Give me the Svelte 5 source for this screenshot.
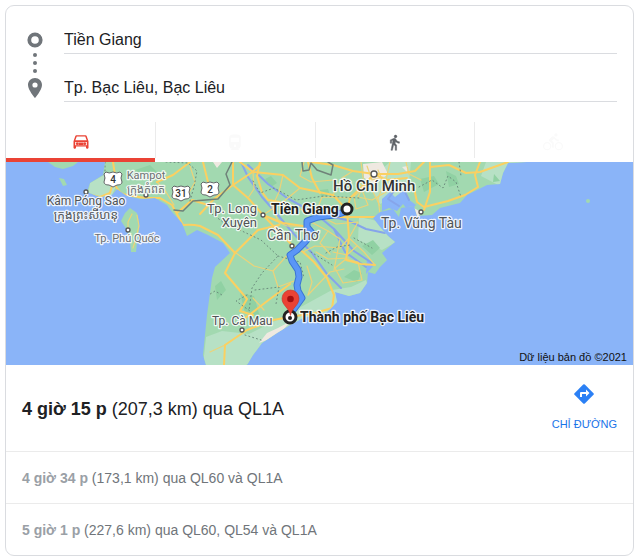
<script lang="ts">
    type Place = {
        lines: string[];
        x: number;
        y: number;
        dot: [number, number];
        size: number;
        anchor: "start" | "middle" | "end";
        tone: "soft" | "mid" | "strong";
    };

    type Alternative = { time: string; detail: string };

    let origin: string = $state("Tiền Giang");
    let destination: string = $state("Tp. Bạc Liêu, Bạc Liêu");
    let mode: string = $state("car");

    const modes = [
        { id: "car", label: "Lái xe", disabled: false },
        { id: "transit", label: "Phương tiện công cộng", disabled: true },
        { id: "walk", label: "Đi bộ", disabled: false },
        { id: "bike", label: "Đi xe đạp", disabled: true },
    ];

    const alternatives: Alternative[] = [
        { time: "4 giờ 34 p", detail: "(173,1 km) qua QL60 và QL1A" },
        { time: "5 giờ 1 p", detail: "(227,6 km) qua QL60, QL54 và QL1A" },
    ];

    const places: Place[] = [
        { lines: ["Kampot", "ក្រុងកំពត"], x: 140, y: 17, dot: [140, 33], size: 11, anchor: "middle", tone: "soft" },
        { lines: ["Kâm Póng Sao", "ក្រុងព្រះសីហនុ"], x: 80, y: 43, dot: [80, 30], size: 12, anchor: "middle", tone: "mid" },
        { lines: ["Tp. Phú Quốc"], x: 121, y: 80, dot: [122, 68], size: 11, anchor: "middle", tone: "soft" },
        { lines: ["Tp. Long", "Xuyên"], x: 251, y: 51, dot: [257, 53], size: 13, anchor: "end", tone: "mid" },
        { lines: ["Cần Thơ"], x: 261, y: 78, dot: [286, 84], size: 14, anchor: "start", tone: "mid" },
        { lines: ["Hồ Chí Minh"], x: 327, y: 29, dot: [368, 12], size: 15, anchor: "start", tone: "strong" },
        { lines: ["Tp. Vũng Tàu"], x: 375, y: 66, dot: [415, 50], size: 14, anchor: "start", tone: "mid" },
        { lines: ["Tp. Cà Mau"], x: 206, y: 163, dot: [236, 168], size: 12, anchor: "start", tone: "mid" },
    ];

    const shields = [
        { n: "4", x: 107, y: 17 },
        { n: "31", x: 175, y: 31 },
        { n: "2", x: 204, y: 27 },
    ];

    const highways = [
        "M81 32 94 35 104 31 109 13 107 0",
        "M109 23 Q114 33 121 33 L139 36 154 36 166 43 177 63 Q186 62 194 64 L212 73 229 91 252 68 273 63",
        "M151 20 167 13 184 0M197 0 202 20 207 28",
        "M171 51 186 38 202 43M194 52 208 37 227 23 245 11 254 3",
        "M227 0V23L242 36 257 53 274 71 286 83 297 90 308 100 321 116 328 133 326 146 309 151 284 155 267 158 241 168 219 183 218 203",
        "M234 0 247 10 277 13 294 26 327 33 341 48",
        "M368 12 358 23 344 36 341 48 343 76 340 98 355 102 369 103",
        "M368 12 347 9 327 3 305 0M368 12 392 12 409 9 418 0",
        "M310 55H348L373 55",
        "M229 91 219 111 241 137 234 149 247 153M234 160 260 140 284 122",
        "M368 12 380 18 401 16M424 0V30L418 48",
        "M424 5 443 3 460 11 474 10 502 0M474 0 469 13 472 25 459 33 442 39 418 45 411 40 408 26",
        "M254 0 251 14 256 30 262 38 274 40M257 53 277 61 297 64M302 0 306 16 314 31",
    ];

    const roads = [
        "M329 106 340 97 352 100 356 118 337 121 329 106",
        "M286 88 267 109 272 125 288 119M267 109 248 104 230 91",
        "M302 133 324 110 338 107M305 60 322 69 334 77 328 108",
        "M257 53 281 64 302 64M257 53 277 40 294 26M277 13 273 30 266 45 274 63",
        "M297 90 309 84 334 86 343 76 358 90 369 103M308 56 316 35 344 36",
        "M327 33 336 16 347 9M355 0 358 23 352 35 366 38 380 30",
        "M301 104 306 120 302 133M247 136 258 148M286 44 301 50 320 44",
        "M219 183 204 190M247 10 248 27 242 36M384 0 380 18 386 30",
        "M318 56 330 62 352 60 343 76M327 90 341 93 351 84M322 69 314 81 324 92",
        "M298 0 294 14 305 20 327 18M350 20 366 28 374 44M400 0 403 12 415 18",
        "M151 20 160 30 168 43M184 4 189 20 180 36M356 28 362 43 350 47 348 34Z",
        "M372 8 378 22 372 36 374 52M361 4 366 18 377 15M310 90 322 97 343 96",
    ];

    const rivers = [
        "M235 0 242 15 256 35 271 52 286 70 306 91 321 112 335 126",
        "M242 3 262 22 281 36 310 52 328 67 348 89 366 101",
        "M310 52 341 58 360 67 379 71M328 67 339 90 360 105",
        "M377 20 388 29 382 37 393 44M399 30 403 38",
    ];

    const boundaries = [
        "M99 0V20M160 0 182 1 191 9 188 25 184 39",
        "M247 19 254 31 268 26 290 38 318 34 353 36",
        "M206 52 217 60 238 70 255 78 272 94 256 111 246 126 243 149",
        "M272 94 294 100 298 116M249 128 273 125 270 142",
        "M201 134 209 129 216 133M239 173 255 178M320 91 331 85 344 83",
        "M241 133 230 139 244 149M413 25 426 18 437 26 442 14 450 20 455 35",
        "M453 0 455 14M348 76 366 86M305 90 326 103",
    ];

    const coast =
        "M99 0 97 13 84 21 81 30 94 35 106 33 111 27 121 34 134 37 149 36 161 43 166 50 176 61 181 74 191 68 202 73 217 81 224 91 209 105 206 116 201 153 197 193 200 203H241L247 193 256 181 271 171 284 163 297 156 321 150 331 140 329 130 343 134 354 131 361 121 362 110 369 112 374 105 381 98 376 91 389 80 382 74 374 65 367 56 374 50 387 47 393 55 395 46 408 44 411 54 426 53 434 46 454 41 461 33 481 23 494 22 497 11 502 1 521 0Z";

    const drive =
        "M341 49C328 55 317 53 309 56L301 59 301 65 306 71 299 80 291 88 284 93 286 99 292 108 293 115 291 123 292 129 296 136 288 147";
</script>

<svelte:head>
    <title>Tiền Giang – Tp. Bạc Liêu</title>
</svelte:head>

<main class="card">
    <form class="stops" onsubmit={(e) => e.preventDefault()}>
        <svg class="stops-icon" width="16" height="66" viewBox="0 0 16 66" aria-hidden="true">
            <circle cx="8" cy="8" r="5.7" fill="none" stroke="#70757a" stroke-width="3.8" />
            <g fill="#70757a">
                <circle cx="8" cy="23" r="2" />
                <circle cx="8" cy="31" r="2" />
                <circle cx="8" cy="39" r="2" />
                <path
                    fill-rule="evenodd"
                    d="M8 46C4 46 1 49 1 53c0 5 7 13 7 13s7-8 7-13c0-4-3-7-7-7zm0 4.4a2.6 2.6 0 1 1 0 5.2 2.6 2.6 0 0 1 0-5.2z"
                />
            </g>
        </svg>
        <div class="fields">
            <input aria-label="Điểm xuất phát" bind:value={origin} />
            <input aria-label="Điểm đến" bind:value={destination} />
        </div>
    </form>

    <div class="modes" role="tablist">
        {#each modes as m (m.id)}
            <button
                class="mode"
                class:active={mode === m.id}
                role="tab"
                aria-selected={mode === m.id}
                aria-label={m.label}
                disabled={m.disabled}
                onclick={() => (mode = m.id)}
            >
                <svg
                    class="mode-icon"
                    class:walk={m.id === "walk"}
                    viewBox="0 0 24 24"
                    fill="currentColor"
                    aria-hidden="true"
                >
                    {#if m.id === "car"}
                        <path
                            fill-rule="evenodd"
                            d="M18.900 5C18.700 4.400 18.200 4 17.500 4h-11c-.7 0-1.200.4-1.400 1L3 11v8c0 .6.400 1 1 1h1c.6 0 1-.4 1-1v-1.500h12V19c0 .6.400 1 1 1h1c.6 0 1-.4 1-1v-8zM6.900 5.500h10.200L18.800 10H5.200zM5 12h14v3.800H5z"
                        />
                        <circle cx="7.500" cy="14" r="1.700" />
                        <circle cx="16.500" cy="14" r="1.700" />
                        <path d="M9 12.500h6v3H9z" />
                    {:else if m.id === "transit"}
                        <path
                            d="M12 3c-4 0-7 .5-7 4v9.500C5 18.400 6.600 20 8.500 20L7 21.500h10L15.500 20c1.900 0 3.500-1.600 3.500-3.500V7c0-3.500-3-4-7-4zM7 7h10v5H7zm5 8a1.500 1.500 0 1 1 0 3 1.500 1.500 0 0 1 0-3z"
                        />
                    {:else if m.id === "walk"}
                        <path
                            stroke="currentColor"
                            stroke-width=".6"
                            d="M13.5 5.500c1.100 0 2-.9 2-2s-.9-2-2-2-2 .9-2 2 .9 2 2 2zM9.800 8.900 7 23h2.100l1.800-8 2.100 2v6h2v-7.500l-2.100-2 .6-3C14.800 12 16.800 13 19 13v-2c-1.900 0-3.500-1-4.300-2.400l-1-1.600c-.4-.6-1-1-1.700-1-.3 0-.5.1-.8.1L6 8.300V13h2V9.600l1.800-.7"
                        />
                    {:else}
                        <path
                            d="M5 12a5 5 0 1 0 0 10 5 5 0 0 0 0-10zm0 8.500a3.500 3.500 0 1 1 0-7 3.500 3.500 0 0 1 0 7zM19 12a5 5 0 1 0 0 10 5 5 0 0 0 0-10zm0 8.500a3.500 3.500 0 1 1 0-7 3.500 3.500 0 0 1 0 7zM15.500 5.500a2 2 0 1 0 0-4 2 2 0 0 0 0 4zM10.800 10.500l2.400-2.400.8.8c1.300 1.300 3 2.100 5 2.100V9c-1.500 0-2.700-.6-3.600-1.500l-1.900-1.900c-1-.8-2-.8-2.900 0L7.800 8.400c-.8.800-.8 2 0 2.800L11 14v5h2v-6.200z"
                        />
                    {/if}
                </svg>
            </button>
        {/each}
    </div>

    <svg class="map" viewBox="0 0 627 203" role="img" aria-label="Bản đồ">
        <defs>
            <clipPath id="land"><path d={coast} /></clipPath>
        </defs>
        <rect width="627" height="203" fill="#8ab4f8" />

        <!-- Land, with darker forest and paler coastal flats -->
        <g fill="#a2d9b0">
            <path d="M42 0H72L67 4 57 7 49 5ZM53 16 58 17 61 23 57 24Z" />
            <path
                d="M124 46 131 51 133 60 133 68 131 80 130 90 125 90 124 79 121 68 115 59 119 51Z"
            />
            <circle cx="582" cy="39" r="2" />
            <path d={coast} />
        </g>
        <g clip-path="url(#land)">
            <path
                fill="#b7e1c5"
                d="M197 203 200 175 216 169 243 172 271 158 326 128 345 125 360 118 364 131 320 165 240 203ZM84 21 100 12 112 20 105 35 82 33ZM353 55 376 60 390 80 376 88 352 78ZM480 0 525 0 494 24 475 14ZM361 20 384 0 405 0 402 30 374 42Z"
            />
            <path
                fill="#90d1a3"
                d="M259 17 265 14 271 21 265 25ZM314 28 322 27 324 33 315 36ZM209 124 215 119 220 128 211 138ZM280 70 286 73 281 78ZM338 115 348 108 356 111 351 120ZM356 84 367 78 374 86 366 93ZM414 17 428 14 433 22 418 30ZM440 9 450 14 453 22 443 25ZM488 12 494 19 487 20ZM129 8 144 3 153 12 142 19ZM234 131 248 134 254 155 239 151Z"
            />
            <g fill="#efe9e1">
                <path d="M357 2 376 0 382 12 369 22 358 16Z" />
                <path d="M253 181 261 171 272 166 285 159 276 169 261 178ZM207 0H216L211 6Z" />
                <path d="M406 45 415 50 411 57ZM396 5 402 4 401 10Z" />
            </g>
            <path
                fill="#8ab4f8"
                d="M376 37 384 30 389 35 398 28 402 37 410 43 403 50 397 42 391 49 383 46 376 49ZM361 97 369 102 360 112Z"
            />
            {#each rivers as d}
                <path {d} class="river" />
            {/each}
            {#each roads as d}
                <path {d} class="road" />
            {/each}
            {#each highways as d}
                <path {d} class="highway" />
            {/each}
            {#each boundaries as d}
                <path {d} class="boundary" />
            {/each}
            <path
                class="border"
                d="M168 48 177 49 187 39 212 37 224 23 220 12 226 0M296 0 297 9 303 8 305 1 311 8 325 13 327 3 322 0"
            />
        </g>
        <path class="road" d="M131 53 133 64 130 76 127 86M122 67V60L126 52" />

        <path class="route-edge" d={drive} />
        <path class="route" d={drive} />

        {#each shields as s}
            <path
                transform="translate({s.x} {s.y})"
                d="M-7-7Q-4-5 0-7 4-5 7-7L9-5Q7-1 9 3 9 6 4 6L0 8-4 6Q-9 6-9 3-7-1-9-5Z"
                fill="#fff"
                stroke="#646669"
            />
            <text class="shield" x={s.x} y={s.y + 4}>{s.n}</text>
        {/each}

        {#each places as p}
            <circle class="dot" cx={p.dot[0]} cy={p.dot[1]} r={p.size > 14 ? 3 : 2} />
            <text class="place {p.tone}" text-anchor={p.anchor} font-size={p.size}>
                {#each p.lines as line, i}
                    <tspan x={p.x} y={p.y + i * 14}>{line}</tspan>
                {/each}
            </text>
        {/each}

        <circle class="stop" cx="341" cy="47" r="5" />
        <text class="place end" x="265" y="52" font-size="14">Tiền Giang</text>

        <circle class="stop" cx="284" cy="155" r="6" />
        <circle cx="284" cy="156" r="2" fill="#222" />
        <path
            fill="#ea4335"
            stroke="#c5352a"
            stroke-width=".6"
            d="M284.500 128a8.500 8.500 0 0 0-8.500 8.500c0 7 7 9 8.500 17 1.500-8 8.500-10 8.500-17a8.500 8.500 0 0 0-8.500-8.500z"
        />
        <circle cx="284.500" cy="137" r="3.300" fill="#a50e0e" />
        <text class="place end" x="294" y="160" font-size="14">Thành phố Bạc Liêu</text>

        <text class="copyright" x="621" y="199">Dữ liệu bản đồ ©2021</text>
    </svg>

    <section class="summary">
        <h1 class="route-title"><b>4 giờ 15 p</b> (207,3 km) qua QL1A</h1>
        <a class="directions" href="#directions">
            <svg width="20" height="20" viewBox="0 0 20 20" aria-hidden="true">
                <path
                    fill="#2b80f5"
                    d="M9.200.5a1.200 1.200 0 0 1 1.600 0l8.700 8.700a1.200 1.200 0 0 1 0 1.600l-8.700 8.700a1.200 1.200 0 0 1-1.600 0L.5 10.800a1.200 1.200 0 0 1 0-1.600z"
                />
                <path fill="#fff" d="M6 13V9q0-1 1-1h5V5.500L15.500 9 12 12.500V10H8v3z" />
            </svg>
            <span>CHỈ ĐƯỜNG</span>
        </a>
    </section>

    {#each alternatives as alt}
        <p class="alternative"><b>{alt.time}</b> {alt.detail}</p>
    {/each}
</main>

<style>
    :global(body) {
        margin: 0;
        background: #fff;
    }

    .card {
        margin: 5px 6px 3px 5px;
        border: 1px solid #dadce0;
        border-radius: 9px;
        overflow: hidden;
        font-family: "Liberation Sans", Arial, sans-serif;
        color: #202124;
    }

    .stops {
        display: flex;
        gap: 21px;
        padding: 18px 16px 20px 21px;
    }

    .stops-icon {
        flex: none;
        margin-top: 8px;
    }

    .fields {
        flex: 1;
        display: grid;
        gap: 18px;
    }

    input {
        box-sizing: border-box;
        width: 100%;
        height: 30px;
        padding: 2px 0 0;
        border: 0;
        border-bottom: 1px solid #dadce0;
        background: none;
        font: inherit;
        font-size: 16px;
        color: #202124;
        outline: none;
    }

    input:focus {
        border-bottom-color: #1a73e8;
    }

    .modes {
        display: grid;
        grid-template-columns: 15fr 16fr 16fr 16fr;
        height: 40px;
    }

    .mode {
        display: flex;
        align-items: center;
        justify-content: center;
        padding: 4px 0 0;
        border: 0;
        border-bottom: 4px solid transparent;
        background: none;
        color: #5f6368;
        cursor: pointer;
    }

    .mode + .mode {
        box-shadow: inset 1px 0 #ebebeb;
    }

    .mode.active {
        border-bottom-color: #ea4335;
        color: #ea4335;
    }

    .mode:disabled {
        color: #fafafa;
        cursor: default;
    }

    .mode-icon {
        width: 20px;
        height: 20px;
    }

    .mode-icon.walk {
        width: 17px;
        height: 17px;
    }

    .map {
        display: block;
        width: 100%;
        height: auto;
        font-family: Roboto, "Noto Sans", "Noto Sans Khmer", sans-serif;
    }

    .river,
    .road,
    .highway,
    .boundary,
    .border,
    .route,
    .route-edge {
        fill: none;
        stroke-linejoin: round;
        stroke-linecap: round;
    }

    .river {
        stroke: #86a5ea;
        stroke-width: 2;
    }

    .road {
        stroke: #ecd379;
        stroke-width: 1.2;
    }

    .highway {
        stroke: #fbd061;
        stroke-width: 2;
    }

    .boundary {
        stroke: #6c8c7d;
        stroke-dasharray: 1 3;
    }

    .border {
        stroke: #6f8279;
        stroke-width: 1.5;
    }

    .route-edge {
        stroke: #3a74d4;
        stroke-width: 7;
    }

    .route {
        stroke: #5a96f7;
        stroke-width: 5;
    }

    .place {
        paint-order: stroke;
        stroke: rgba(255, 255, 255, 0.85);
        stroke-width: 2.5px;
        stroke-linejoin: round;
    }

    .place.soft {
        fill: #6b6f73;
    }

    .place.mid {
        fill: #505357;
    }

    .place.strong {
        fill: #333;
        font-weight: 500;
    }

    .place.end {
        fill: #222;
        font-weight: 700;
    }

    .dot {
        fill: #fff;
        stroke: #555;
        stroke-width: 1.3;
    }

    .stop {
        fill: #fff;
        stroke: #222;
        stroke-width: 3;
    }

    .shield {
        fill: #333;
        font-size: 10px;
        font-weight: 500;
        text-anchor: middle;
    }

    .copyright {
        font-family: "Liberation Sans", Arial, sans-serif;
        font-size: 11px;
        fill: #111;
        text-anchor: end;
    }

    .summary {
        display: flex;
        align-items: center;
        justify-content: space-between;
        padding: 0 16px;
        height: 86px;
    }

    .route-title {
        margin: 0;
        padding-top: 2px;
        font-size: 18px;
        font-weight: 400;
    }

    .directions {
        display: flex;
        flex-direction: column;
        align-items: center;
        gap: 12px;
        font-size: 11px;
        line-height: 16px;
        color: #1a73e8;
        text-decoration: none;
    }

    .alternative {
        margin: 0;
        padding: 2px 16px 0;
        border-top: 1px solid #ebebeb;
        font-size: 14px;
        line-height: 49px;
        color: #70757a;
    }

    .alternative b {
        color: #9aa0a6;
    }
</style>
